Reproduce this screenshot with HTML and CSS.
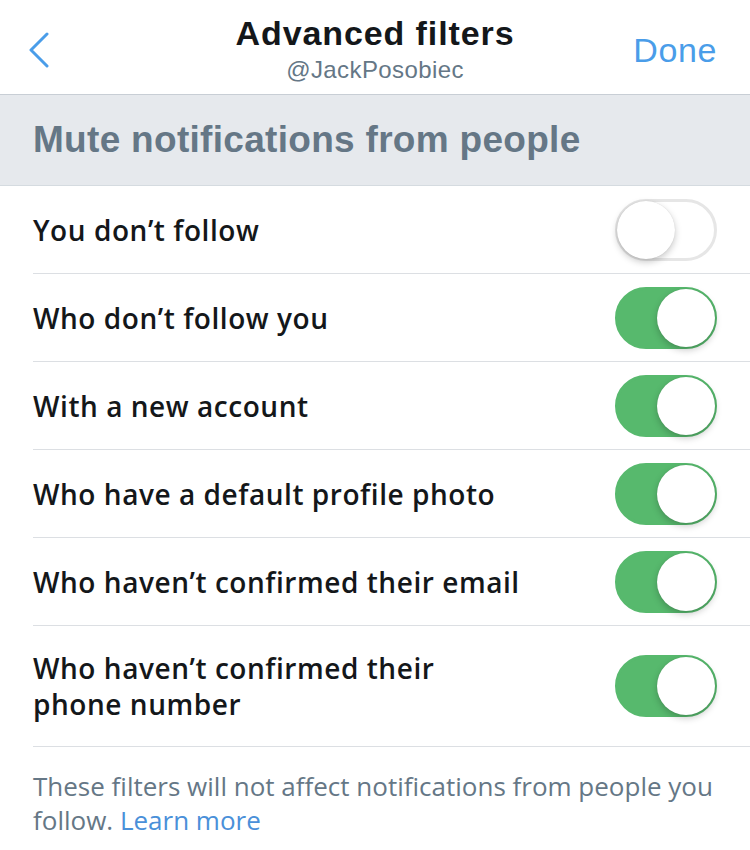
FILE: index.html
```html
<!DOCTYPE html>
<html>
<head>
<meta charset="utf-8">
<link rel="stylesheet" href="styles.css">
</head>
<body>
<div class="screen">
  <header class="nav">
    <div class="back">
      <svg width="22" height="36" viewBox="0 0 22 36"><path d="M19 2 L3 18 L19 34" fill="none" stroke="#4a9de9" stroke-width="3" stroke-linecap="round" stroke-linejoin="round"/></svg>
    </div>
    <div class="titles">
      <div class="title">Advanced filters</div>
      <div class="subtitle">@JackPosobiec</div>
    </div>
    <div class="done">Done</div>
  </header>
  <div class="section">Mute notifications from people</div>
  <ul class="list">
    <li class="row"><span class="label">You don’t follow</span><span class="toggle"></span></li>
    <li class="row"><span class="label">Who don’t follow you</span><span class="toggle on"></span></li>
    <li class="row"><span class="label">With a new account</span><span class="toggle on"></span></li>
    <li class="row"><span class="label">Who have a default profile photo</span><span class="toggle on"></span></li>
    <li class="row"><span class="label">Who haven’t confirmed their email</span><span class="toggle on"></span></li>
    <li class="row tall"><span class="label">Who haven’t confirmed their<br>phone number</span><span class="toggle on"></span></li>
  </ul>
  <p class="note">These filters will not affect notifications from people you follow. <a class="link">Learn more</a></p>
</div>
</body>
</html>
```
FILE: styles.css
```css
* { box-sizing: border-box; }
html, body { margin: 0; padding: 0; background: #fff; }
body { font-family: "Open Sans", "Liberation Sans", sans-serif; width: 750px; height: 850px; overflow: hidden; }
.screen { width: 750px; }
.nav {
  height: 95px;
  display: flex;
  align-items: flex-start;
  border-bottom: 1px solid #c8ced5;
}
.back { width: 120px; padding: 32px 0 0 28px; }
.back svg { display: block; }
.titles { flex: 1; text-align: center; padding-top: 13px; }
.title { font-family: "Liberation Sans", sans-serif; font-weight: 700; font-size: 34px; line-height: 40px; color: #14171a; letter-spacing: 0.9px; }
.subtitle { font-family: "Liberation Sans", sans-serif; font-size: 24px; line-height: 30px; color: #657786; margin-top: 2px; letter-spacing: 0.4px; }
.done { width: 120px; text-align: right; padding: 30px 33px 0 0; font-family: "Liberation Sans", sans-serif; font-size: 34px; line-height: 40px; color: #4a9de9; letter-spacing: 0.6px; }
.section {
  background: #e6e9ed;
  height: 91px;
  padding: 0 33px;
  display: flex;
  align-items: center;
  font-family: "Liberation Sans", sans-serif;
  font-weight: 700;
  font-size: 37px;
  letter-spacing: 0.3px;
  color: #657786;
  border-bottom: 1px solid #d5dbe0;
}
.list { list-style: none; margin: 0; padding: 0 0 0 33px; }
.row {
  height: 88px;
  display: flex;
  align-items: center;
  justify-content: space-between;
  border-bottom: 1px solid #dcdfe3;
  padding-right: 33px;
}
.row.tall { height: 121px; }
.label { font-size: 28px; font-weight: 600; color: #14171a; line-height: 36px; letter-spacing: 0.55px; }
.toggle {
  width: 102px; height: 62px; border-radius: 31px;
  border: 3px solid #e6e6e6;
  background: #fff;
  position: relative;
  flex: none;
}
.toggle::after {
  content: ""; position: absolute; left: -1px; top: -1px;
  width: 58px; height: 58px; border-radius: 50%; background: #fff;
  box-shadow: 0 3px 7px rgba(0,0,0,0.22), 0 0 1px rgba(0,0,0,0.15);
}
.toggle.on { background: #57b96d; border-color: #57b96d; }
.toggle.on::after { left: auto; right: -1px; }
.note { margin: 0; padding: 22px 33px 0; font-size: 26px; line-height: 34px; color: #657786; }
.link { color: #4a90d9; text-decoration: none; }
```
